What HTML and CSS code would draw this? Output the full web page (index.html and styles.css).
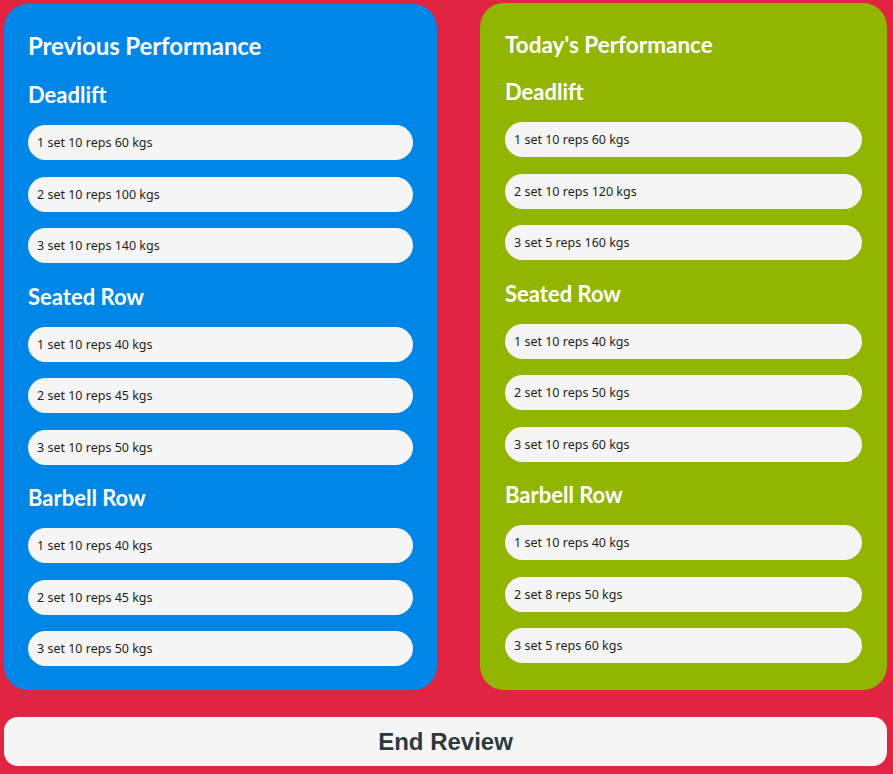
FILE: index.html
```html
<!DOCTYPE html>
<html>
<head>
<meta charset="utf-8">
<link rel="stylesheet" href="styles.css">
<title>Review</title>
</head>
<body>
<div class="page">
  <div class="columns">
    <section class="card card-prev">
      <h1 class="card-title">Previous Performance</h1>
      <h2 class="exercise">Deadlift</h2>
      <ul class="sets">
        <li class="set">1 set 10 reps 60 kgs</li>
        <li class="set">2 set 10 reps 100 kgs</li>
        <li class="set">3 set 10 reps 140 kgs</li>
      </ul>
      <h2 class="exercise">Seated Row</h2>
      <ul class="sets">
        <li class="set">1 set 10 reps 40 kgs</li>
        <li class="set">2 set 10 reps 45 kgs</li>
        <li class="set">3 set 10 reps 50 kgs</li>
      </ul>
      <h2 class="exercise">Barbell Row</h2>
      <ul class="sets">
        <li class="set">1 set 10 reps 40 kgs</li>
        <li class="set">2 set 10 reps 45 kgs</li>
        <li class="set">3 set 10 reps 50 kgs</li>
      </ul>
    </section>
    <section class="card card-today">
      <h1 class="card-title">Today's Performance</h1>
      <h2 class="exercise">Deadlift</h2>
      <ul class="sets">
        <li class="set">1 set 10 reps 60 kgs</li>
        <li class="set">2 set 10 reps 120 kgs</li>
        <li class="set">3 set 5 reps 160 kgs</li>
      </ul>
      <h2 class="exercise">Seated Row</h2>
      <ul class="sets">
        <li class="set">1 set 10 reps 40 kgs</li>
        <li class="set">2 set 10 reps 50 kgs</li>
        <li class="set">3 set 10 reps 60 kgs</li>
      </ul>
      <h2 class="exercise">Barbell Row</h2>
      <ul class="sets">
        <li class="set">1 set 10 reps 40 kgs</li>
        <li class="set">2 set 8 reps 50 kgs</li>
        <li class="set">3 set 5 reps 60 kgs</li>
      </ul>
    </section>
  </div>
  <button class="end-btn" type="button">End Review</button>
</div>
</body>
</html>
```
FILE: styles.css
```css
* { box-sizing: border-box; }
html, body {
  margin: 0;
  padding: 0;
  background: #e02442;
  height: 100%;
}
body {
  font-family: Lato, "Noto Sans", sans-serif;
  overflow: hidden;
}
.page {
  padding: 3px 6px 0 4px;
}
.columns {
  display: grid;
  grid-template-columns: 433px 407px;
  column-gap: 43px;
  align-items: end;
}
.card {
  border-radius: 24px;
  padding: 27px 24px 25px;
  color: #ffffff;
  height: 686px;
}
.card-prev {
  background: #0086e6;
}
.card-today {
  background: #92b502;
  height: 687px;
  padding: 27px 25px 28px;
}
.card-title {
  margin: 0;
  font-size: 24px;
  line-height: 30px;
  font-weight: 700;
  letter-spacing: -0.1px;
}
.card-today .card-title {
  font-size: 22.5px;
  letter-spacing: 0;
}
.exercise {
  margin: 19.5px 0 16px;
  font-size: 22px;
  line-height: 28px;
  font-weight: 700;
}
.card-prev .card-title + .exercise {
  margin-top: 20px;
}
.card-today .card-title + .exercise {
  margin-top: 18px;
}
.sets {
  list-style: none;
  margin: 0;
  padding: 0;
  display: flex;
  flex-direction: column;
  gap: 16.5px;
}
.set {
  height: 35px;
  border-radius: 17.5px;
  background: #f5f5f5;
  color: #1e1e1e;
  font-family: "Noto Sans", sans-serif;
  font-size: 12.5px;
  padding-left: 9px;
  display: flex;
  align-items: center;
}
.end-btn {
  display: block;
  width: 883px;
  height: 49px;
  margin-top: 27px;
  border: none;
  border-radius: 14px;
  background: #f5f5f5;
  color: #2c3a40;
  font-family: "Liberation Sans", Arial, sans-serif;
  font-size: 24px;
  font-weight: 700;
  padding: 0;
}
```
